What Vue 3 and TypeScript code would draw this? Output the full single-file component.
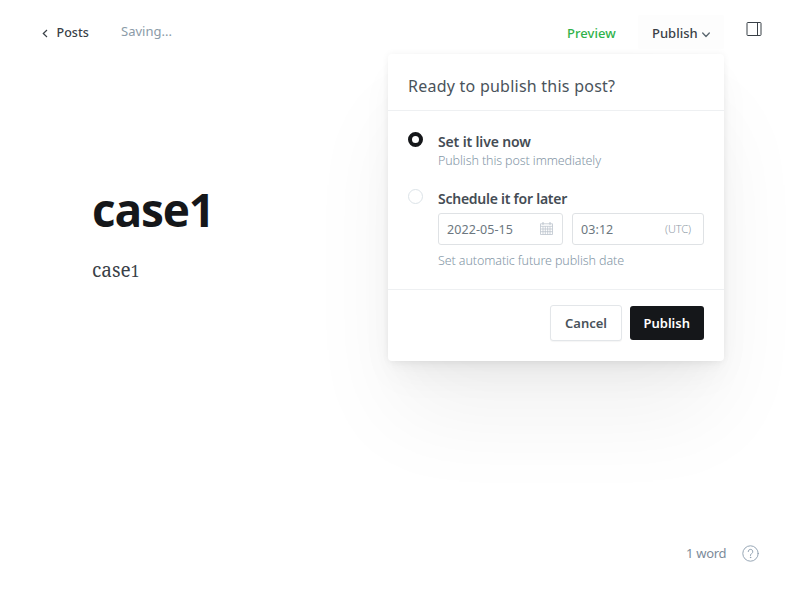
<script setup lang="ts">
import { ref } from 'vue'

const mode = ref<'now' | 'later'>('now')
const date = ref('2022-05-15')
const time = ref('03:12')
const title = ref('case1')
</script>

<template>
  <div class="editor">
    <header class="topbar">
      <a class="back">
        <svg width="6" height="9" viewBox="0 0 6 9"><path d="M5 1 1.3 4.5 5 8" fill="none" stroke="#394047" stroke-width="1.2" /></svg>
        <span class="posts">Posts</span>
      </a>
      <span class="saving">Saving...</span>
      <span class="preview">Preview</span>
      <div class="trigger">
        <span>Publish</span>
        <svg width="8" height="6" viewBox="0 0 8 6"><path d="M.7 1 4 4.5 7.3 1" fill="none" stroke="#5d6972" stroke-width="1.35" stroke-linecap="round" stroke-linejoin="round" /></svg>
      </div>
      <svg class="sidebar-icon" width="16" height="16" viewBox="0 0 16 16"><rect x="1" y="1.5" width="14" height="13" rx=".8" fill="none" stroke="#394047" /><path d="M11.5 1.5v13" stroke="#394047" /></svg>
    </header>

    <main class="post">
      <h1>{{ title }}</h1>
      <p>case<span class="oldstyle">1</span></p>
    </main>

    <section class="panel">
      <h2>Ready to publish this post?</h2>
      <div class="options">
        <div class="option" @click="mode = 'now'">
          <i class="radio" :class="{ checked: mode === 'now' }"></i>
          <div class="body">
            <div class="label now">Set it live now</div>
            <div class="hint">Publish this post immediately</div>
          </div>
        </div>
        <div class="option second" @click="mode = 'later'">
          <i class="radio" :class="{ checked: mode === 'later' }"></i>
          <div class="body">
            <div class="label later">Schedule it for later</div>
            <div class="fields">
              <div class="field date">
                <span>{{ date }}</span>
                <svg width="13" height="13" viewBox="0 0 13 13" fill="none" stroke="#b9c2cb" stroke-width=".75">
                  <path d="M.5 1.8h12v10.7H.5zM.5 4.3h12M3 4.3v8.2M5.3 4.3v8.2M7.7 4.3v8.2M10 4.3v8.2M.5 7h12M.5 9.7h12" />
                  <path d="M3 0v2.8M10 0v2.8" stroke-width="1" />
                </svg>
              </div>
              <div class="field time">
                <span>{{ time }}</span>
                <small>(UTC)</small>
              </div>
            </div>
            <div class="hint auto">Set automatic future publish date</div>
          </div>
        </div>
      </div>
      <footer class="actions">
        <button class="cancel">Cancel</button>
        <button class="publish">Publish</button>
      </footer>
    </section>

    <div class="status">
      <span>1 word</span>
      <svg width="17" height="17" viewBox="0 0 17 17" fill="none" stroke="#8b9cad" stroke-width=".9" stroke-linecap="round"><circle cx="8.5" cy="8.5" r="7.7" /><path d="M6.2 6.6a2.3 2.3 0 1 1 3.3 2.1c-.7.35-1 .7-1 1.4v.5" /><circle cx="8.5" cy="12.4" r=".25" fill="#8b9cad" /></svg>
    </div>
  </div>
</template>

<style>
body {
  background: #fff;
}
</style>

<style scoped>
.editor {
  position: relative;
  box-sizing: border-box;
  width: 800px;
  height: 600px;
  overflow: hidden;
  font-family: "Noto Sans", "Open Sans", sans-serif;
  font-size: 13px;
  color: #394047;
  background: #fff;
}
.topbar {
  display: flex;
  align-items: flex-start;
  height: 54px;
  line-height: 18px;
}
.back {
  display: flex;
  align-items: center;
  gap: 9px;
  margin: 24px 0 0 41.5px;
  width: 79.5px;
  font-size: 12.5px;
  font-weight: 500;
}
.posts {
  letter-spacing: .05px;
}
.saving {
  flex: 1;
  margin-top: 22px;
  color: #8b9ba8;
}
.preview {
  margin-top: 24px;
  width: 71px;
  color: #30b24a;
  font-weight: 500;
  letter-spacing: .05px;
}
.trigger {
  display: flex;
  align-items: center;
  gap: 4px;
  box-sizing: border-box;
  width: 86px;
  height: 34px;
  margin: 15px 22px 0 0;
  padding: 2px 0 0 14px;
  border-radius: 2px;
  background: #fdfdfd;
  font-weight: 500;
}
.trigger svg {
  margin-top: 3px;
}
.sidebar-icon {
  margin: 21px 38px 0 0;
}
.post {
  padding: 129px 0 0 92px;
}
h1 {
  margin: 0;
  font-family: "Open Sans", sans-serif;
  font-size: 46px;
  line-height: 52px;
  font-weight: 700;
  letter-spacing: -1.2px;
  color: #15171a;
}
.post p {
  margin: 21px 0 0;
  font-family: "Noto Serif", "Liberation Serif", serif;
  font-size: 19px;
  line-height: 28px;
}
.oldstyle {
  font-size: 15.5px;
}
.panel {
  position: absolute;
  left: 388px;
  top: 54px;
  width: 336px;
  height: 307px;
  border-radius: 4px;
  background: #fff;
  box-shadow: 0 0 7px rgba(0, 0, 0, .055), 0 7px 12px -3px rgba(0, 0, 0, .04), 0 18px 34px -6px rgba(0, 0, 0, .05), 0 60px 90px -8px rgba(0, 0, 0, .06);
}
h2 {
  box-sizing: border-box;
  height: 57px;
  margin: 0;
  padding: 20px 20px 0;
  border-bottom: 1px solid #eef0f2;
  font-size: 16px;
  line-height: 24px;
  font-weight: 400;
  letter-spacing: .24px;
  color: #4a535b;
}
.options {
  box-sizing: border-box;
  height: 179px;
  padding: 20px 20px 0;
  border-bottom: 1px solid #eef0f2;
}
.option {
  display: flex;
  gap: 15px;
}
.second {
  margin-top: 18px;
}
.radio {
  box-sizing: border-box;
  flex: none;
  width: 15px;
  height: 15px;
  margin-top: 1px;
  border: 1px solid #dce3e8;
  border-radius: 50%;
}
.radio.checked {
  border: 4.5px solid #15171a;
}
.body {
  flex: 1;
}
.label {
  height: 20px;
  font-size: 14px;
  line-height: 21px;
  font-weight: 600;
  color: #444c54;
}
.now {
  letter-spacing: -.14px;
  line-height: 22px;
}
.later {
  letter-spacing: -.25px;
}
.hint {
  height: 19px;
  font-size: 12.5px;
  line-height: 19px;
  font-weight: 300;
  letter-spacing: -.1px;
  color: #8496a6;
}
.fields {
  display: flex;
  gap: 9px;
  margin-top: 5px;
}
.field {
  display: flex;
  align-items: center;
  justify-content: space-between;
  box-sizing: border-box;
  height: 32px;
  padding: 1px 12px 0 8px;
  border: 1px solid #dfe2e5;
  border-radius: 3px;
  color: #6c7780;
  font-size: 12.5px;
  letter-spacing: .08px;
}
.date {
  width: 125px;
  padding-right: 9px;
}
.date svg {
  margin-top: -3px;
}
.time {
  width: 132px;
}
.field small {
  margin-top: -2px;
  font-size: 11px;
  font-weight: 300;
  letter-spacing: -.1px;
  color: #929da8;
}
.auto {
  margin-top: 6px;
}
.actions {
  display: flex;
  justify-content: flex-end;
  gap: 8px;
  padding: 15px 20px;
}
button {
  box-sizing: border-box;
  padding: 0;
  border: 0;
  border-radius: 3px;
  font-family: inherit;
  font-size: 13px;
  font-weight: 600;
}
.cancel {
  width: 72px;
  height: 36px;
  border: 1px solid #e3e6e9;
  background: #fff;
  box-shadow: 0 1px 1px rgba(0, 0, 0, .04);
  color: #4a535b;
}
.publish {
  width: 74.5px;
  height: 34px;
  margin: 1px 0 0 -.5px;
  background: #15171a;
  color: #fff;
}
.status {
  position: absolute;
  left: 686px;
  top: 544px;
  display: flex;
  align-items: center;
  gap: 16px;
  line-height: 18px;
  letter-spacing: -.3px;
  color: #7c8b9a;
}
</style>
